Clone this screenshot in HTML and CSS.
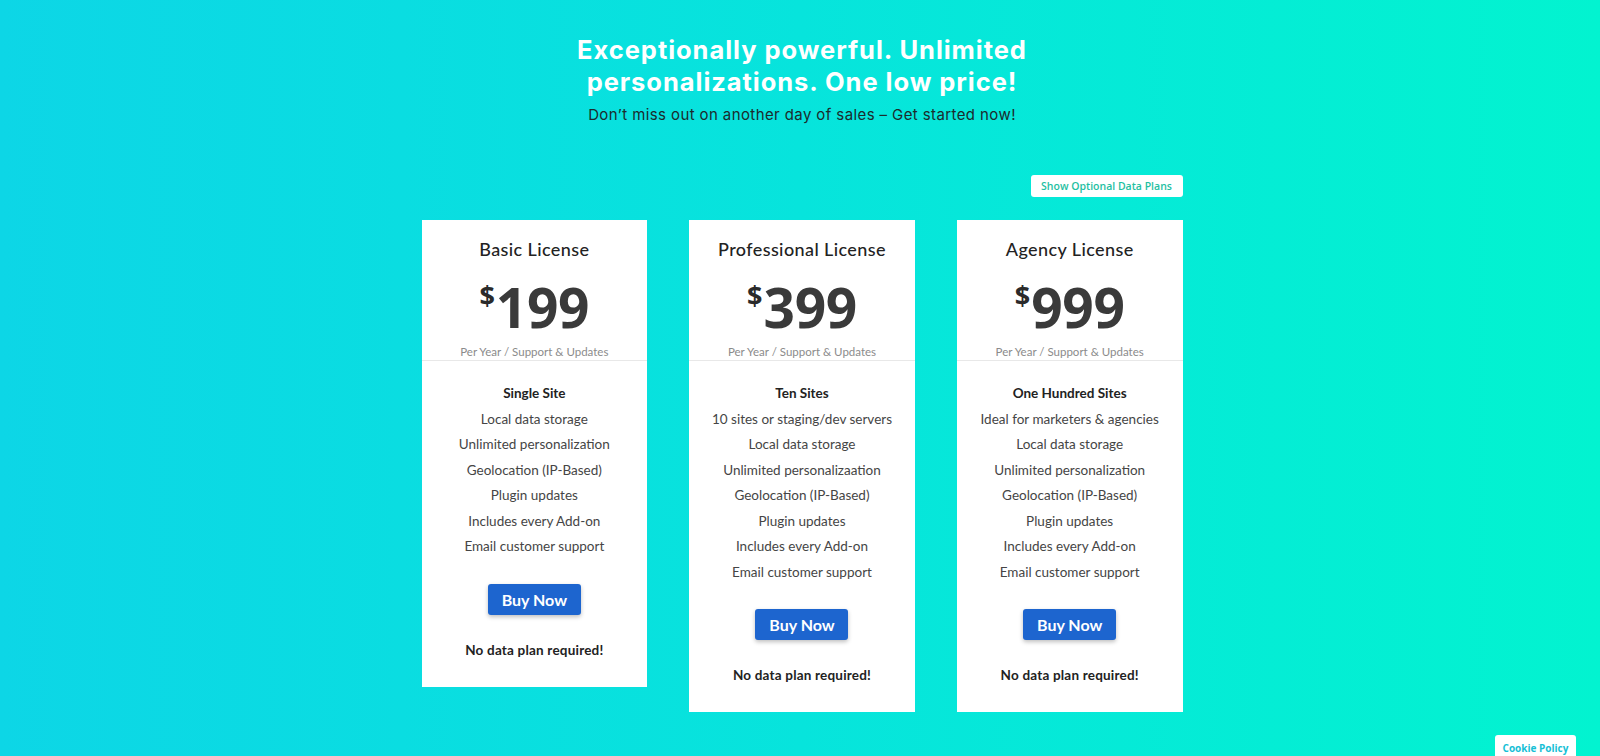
FILE: index.html
```html
<!DOCTYPE html>
<html lang="en">
<head>
<meta charset="utf-8">
<title>Pricing</title>
<link rel="stylesheet" href="styles.css">
</head>
<body>
<main class="page">
  <header class="hero">
    <h1 class="hero-title">Exceptionally powerful. Unlimited<br>personalizations. One low price!</h1>
    <p class="hero-sub">Don’t miss out on another day of sales – Get started now!</p>
  </header>

  <section class="pricing">
    <div class="toolbar">
      <button class="data-btn" type="button">Show Optional Data Plans</button>
    </div>
    <div class="cards">
      <article class="card">
        <div class="card-head">
          <h2 class="card-title">Basic License</h2>
          <div class="price"><span class="currency">$</span><span class="amount">199</span></div>
          <p class="period">Per Year / Support &amp; Updates</p>
        </div>
        <ul class="features">
          <li class="feature-main">Single Site</li>
          <li>Local data storage</li>
          <li>Unlimited personalization</li>
          <li>Geolocation (IP-Based)</li>
          <li>Plugin updates</li>
          <li>Includes every Add-on</li>
          <li>Email customer support</li>
        </ul>
        <button class="buy-btn" type="button">Buy Now</button>
        <p class="note">No data plan required!</p>
      </article>

      <article class="card">
        <div class="card-head">
          <h2 class="card-title">Professional License</h2>
          <div class="price"><span class="currency">$</span><span class="amount">399</span></div>
          <p class="period">Per Year / Support &amp; Updates</p>
        </div>
        <ul class="features">
          <li class="feature-main">Ten Sites</li>
          <li>10 sites or staging/dev servers</li>
          <li>Local data storage</li>
          <li>Unlimited personalizaation</li>
          <li>Geolocation (IP-Based)</li>
          <li>Plugin updates</li>
          <li>Includes every Add-on</li>
          <li>Email customer support</li>
        </ul>
        <button class="buy-btn" type="button">Buy Now</button>
        <p class="note">No data plan required!</p>
      </article>

      <article class="card">
        <div class="card-head">
          <h2 class="card-title">Agency License</h2>
          <div class="price"><span class="currency">$</span><span class="amount">999</span></div>
          <p class="period">Per Year / Support &amp; Updates</p>
        </div>
        <ul class="features">
          <li class="feature-main">One Hundred Sites</li>
          <li>Ideal for marketers &amp; agencies</li>
          <li>Local data storage</li>
          <li>Unlimited personalization</li>
          <li>Geolocation (IP-Based)</li>
          <li>Plugin updates</li>
          <li>Includes every Add-on</li>
          <li>Email customer support</li>
        </ul>
        <button class="buy-btn" type="button">Buy Now</button>
        <p class="note">No data plan required!</p>
      </article>
    </div>
  </section>
</main>
<a class="cookie" href="#">Cookie Policy</a>
</body>
</html>
```

FILE: styles.css
```css
* { box-sizing: border-box; }

html, body {
  margin: 0;
  padding: 0;
}

body {
  min-height: 100vh;
  background: linear-gradient(90deg, #0dd6e6 0%, #07e4dc 50%, #02f3d0 100%);
  font-family: "Lato", "Open Sans", sans-serif;
  color: #333;
  overflow: hidden;
}

.page {
  display: flex;
  flex-direction: column;
  align-items: center;
  padding-left: 4px;
}

.hero {
  text-align: center;
  padding-top: 34px;
}

.hero-title {
  margin: 0;
  font-family: "Inter", "Open Sans", sans-serif;
  font-weight: 700;
  font-size: 25.5px;
  line-height: 32px;
  letter-spacing: 0.95px;
  color: #ffffff;
}

.hero-sub {
  margin: 7px 0 0;
  font-family: "Inter", "Open Sans", sans-serif;
  font-size: 15px;
  line-height: 20px;
  letter-spacing: 0.4px;
  color: #1c2b2d;
}

.pricing {
  width: 761px;
  margin-top: 50px;
}

.toolbar {
  display: flex;
  justify-content: flex-end;
}

.data-btn {
  height: 22px;
  width: 152px;
  padding: 0;
  border: none;
  border-radius: 3px;
  background: #ffffff;
  color: #1fc0a2;
  font-family: "Open Sans", sans-serif;
  font-size: 10.5px;
  font-weight: 600;
  cursor: pointer;
}

.cards {
  margin-top: 23px;
  display: grid;
  grid-template-columns: repeat(3, 1fr);
  column-gap: 42px;
  align-items: start;
}

.card {
  background: #ffffff;
  text-align: center;
  padding-bottom: 27px;
  display: flex;
  flex-direction: column;
  align-items: center;
}

.card-head {
  width: 100%;
  padding-top: 17px;
  border-bottom: 1px solid #e8e8e8;
}

.card-title {
  margin: 0;
  font-size: 18px;
  line-height: 24px;
  font-weight: 500;
  letter-spacing: 0.4px;
  color: #222;
}

.price {
  margin-top: 16px;
  display: flex;
  justify-content: center;
  align-items: flex-start;
  height: 60px;
  color: #3a3a3a;
}

.currency {
  font-family: "Open Sans", sans-serif;
  font-weight: 700;
  font-size: 27px;
  line-height: 27px;
  margin-top: 4px;
  margin-right: 1px;
  color: #2a2a2a;
}

.amount {
  font-family: "Open Sans", sans-serif;
  font-weight: 700;
  font-size: 55px;
  line-height: 60px;
  letter-spacing: -0.3px;
}

.period {
  margin: 7px 0 0;
  font-size: 11.5px;
  line-height: 16px;
  color: #8b8b8b;
}

.features {
  list-style: none;
  margin: 0;
  padding: 20px 0 0;
  width: 100%;
}

.features li {
  font-size: 13.5px;
  line-height: 25.5px;
  color: #454545;
}

.features .feature-main {
  font-weight: 700;
  color: #222;
}

.buy-btn {
  margin-top: 24px;
  width: 93px;
  height: 31px;
  border: none;
  border-radius: 3px;
  background: #1d65cf;
  color: #ffffff;
  font-family: "Lato", sans-serif;
  font-weight: 700;
  font-size: 16px;
  box-shadow: 0 2px 4px rgba(0, 0, 0, 0.25);
  cursor: pointer;
}

.note {
  margin: 25px 0 0;
  font-size: 13.5px;
  line-height: 20px;
  font-weight: 700;
  letter-spacing: 0.2px;
  color: #222;
}

.cookie {
  position: fixed;
  right: 24px;
  bottom: -6px;
  width: 81px;
  height: 27px;
  padding-top: 6px;
  background: #ffffff;
  border-radius: 3px 3px 0 0;
  text-align: center;
  font-family: "Open Sans", sans-serif;
  font-size: 10px;
  font-weight: 700;
  color: #16bfd6;
  text-decoration: none;
}
```
